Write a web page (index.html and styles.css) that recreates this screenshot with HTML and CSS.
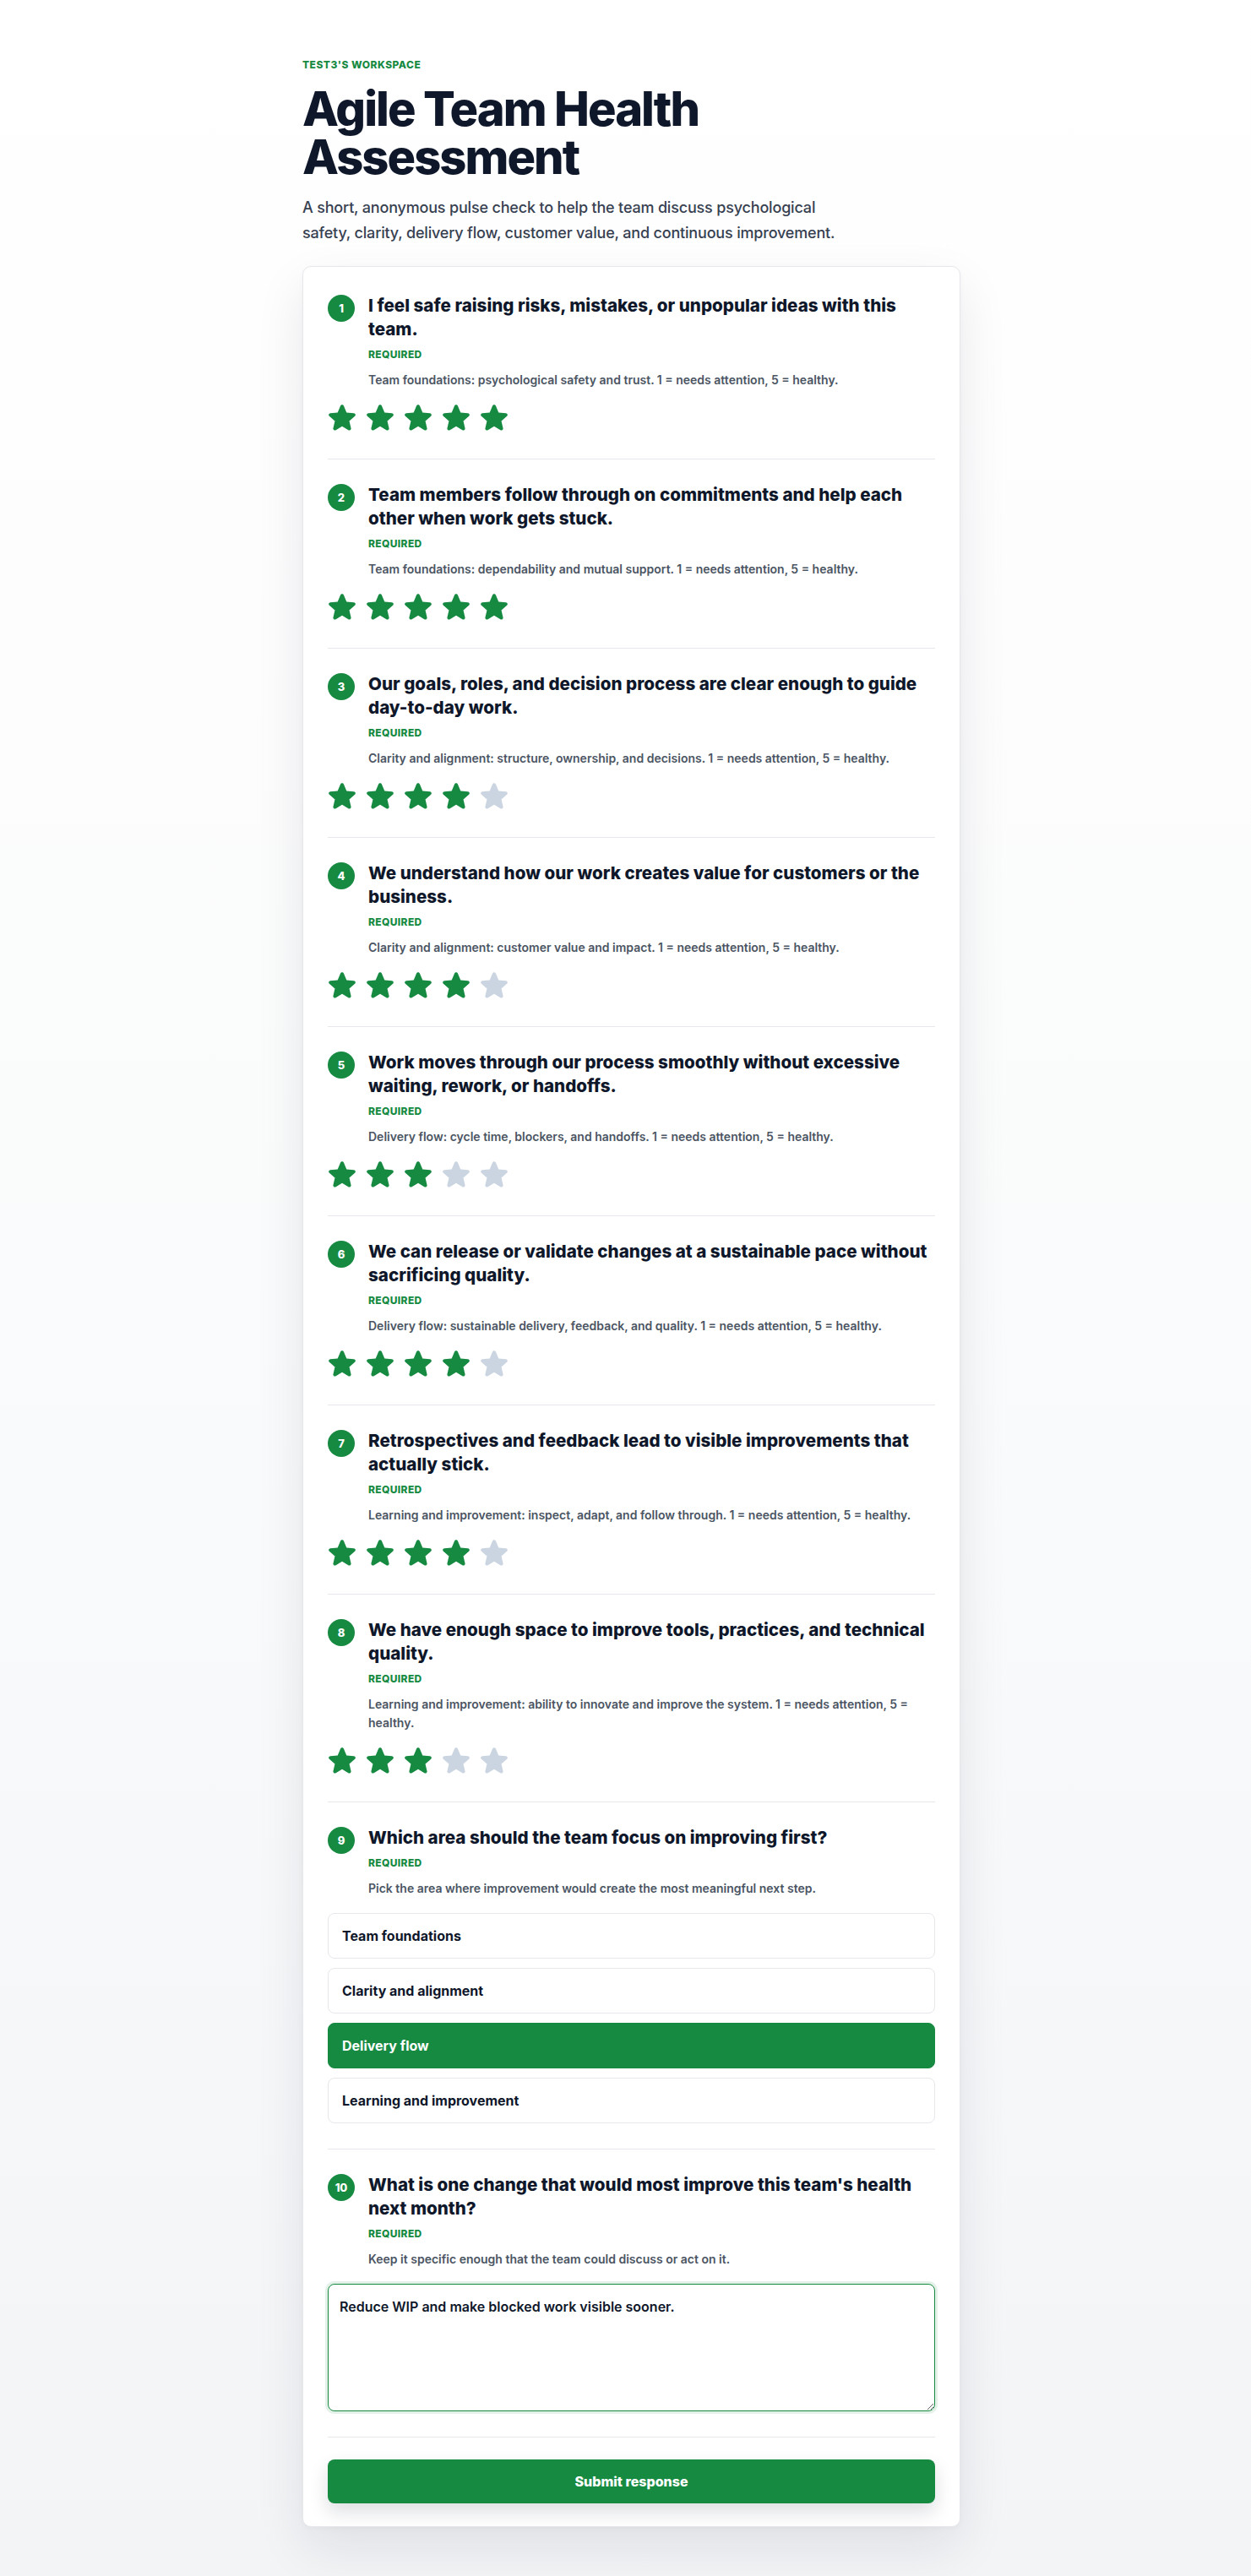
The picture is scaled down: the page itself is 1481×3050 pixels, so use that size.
FILE: index.html
```html
<!DOCTYPE html>
<html lang="en">
<head>
<meta charset="utf-8">
<title>Agile Team Health Assessment</title>
<link rel="stylesheet" href="styles.css">
</head>
<body>
<main class="page">
  <header class="intro">
    <div class="eyebrow">Test3's Workspace</div>
    <h1 class="title">Agile Team Health Assessment</h1>
    <p class="lead">A short, anonymous pulse check to help the team discuss psychological safety, clarity, delivery flow, customer value, and continuous improvement.</p>
  </header>

  <form class="card">
    <section class="question">
      <div class="q-head">
        <span class="num">1</span>
        <div class="q-text">
          <h2 class="q-title">I feel safe raising risks, mistakes, or unpopular ideas with this team.</h2>
          <div class="req">Required</div>
          <p class="q-desc">Team foundations: psychological safety and trust. 1 = needs attention, 5 = healthy.</p>
        </div>
      </div>
      <div class="stars" data-value="5">
        <svg class="star on" viewBox="2 2.4 20 19.2"><path d="M10.788 3.21c.448-1.077 1.976-1.077 2.424 0l2.082 5.006 5.404.434c1.164.093 1.636 1.545.749 2.305l-4.117 3.527 1.257 5.273c.271 1.136-.964 2.033-1.960 1.425L12 18.354 7.373 21.18c-.996.608-2.231-.29-1.960-1.425l1.257-5.273-4.117-3.527c-.887-.76-.415-2.212.749-2.305l5.404-.434 2.082-5.005Z"/></svg>
        <svg class="star on" viewBox="2 2.4 20 19.2"><path d="M10.788 3.21c.448-1.077 1.976-1.077 2.424 0l2.082 5.006 5.404.434c1.164.093 1.636 1.545.749 2.305l-4.117 3.527 1.257 5.273c.271 1.136-.964 2.033-1.960 1.425L12 18.354 7.373 21.18c-.996.608-2.231-.29-1.960-1.425l1.257-5.273-4.117-3.527c-.887-.76-.415-2.212.749-2.305l5.404-.434 2.082-5.005Z"/></svg>
        <svg class="star on" viewBox="2 2.4 20 19.2"><path d="M10.788 3.21c.448-1.077 1.976-1.077 2.424 0l2.082 5.006 5.404.434c1.164.093 1.636 1.545.749 2.305l-4.117 3.527 1.257 5.273c.271 1.136-.964 2.033-1.960 1.425L12 18.354 7.373 21.18c-.996.608-2.231-.29-1.960-1.425l1.257-5.273-4.117-3.527c-.887-.76-.415-2.212.749-2.305l5.404-.434 2.082-5.005Z"/></svg>
        <svg class="star on" viewBox="2 2.4 20 19.2"><path d="M10.788 3.21c.448-1.077 1.976-1.077 2.424 0l2.082 5.006 5.404.434c1.164.093 1.636 1.545.749 2.305l-4.117 3.527 1.257 5.273c.271 1.136-.964 2.033-1.960 1.425L12 18.354 7.373 21.18c-.996.608-2.231-.29-1.960-1.425l1.257-5.273-4.117-3.527c-.887-.76-.415-2.212.749-2.305l5.404-.434 2.082-5.005Z"/></svg>
        <svg class="star on" viewBox="2 2.4 20 19.2"><path d="M10.788 3.21c.448-1.077 1.976-1.077 2.424 0l2.082 5.006 5.404.434c1.164.093 1.636 1.545.749 2.305l-4.117 3.527 1.257 5.273c.271 1.136-.964 2.033-1.960 1.425L12 18.354 7.373 21.18c-.996.608-2.231-.29-1.960-1.425l1.257-5.273-4.117-3.527c-.887-.76-.415-2.212.749-2.305l5.404-.434 2.082-5.005Z"/></svg>
      </div>
    </section>

    <section class="question">
      <div class="q-head">
        <span class="num">2</span>
        <div class="q-text">
          <h2 class="q-title">Team members follow through on commitments and help each other when work gets stuck.</h2>
          <div class="req">Required</div>
          <p class="q-desc">Team foundations: dependability and mutual support. 1 = needs attention, 5 = healthy.</p>
        </div>
      </div>
      <div class="stars" data-value="5">
        <svg class="star on" viewBox="2 2.4 20 19.2"><path d="M10.788 3.21c.448-1.077 1.976-1.077 2.424 0l2.082 5.006 5.404.434c1.164.093 1.636 1.545.749 2.305l-4.117 3.527 1.257 5.273c.271 1.136-.964 2.033-1.960 1.425L12 18.354 7.373 21.18c-.996.608-2.231-.29-1.960-1.425l1.257-5.273-4.117-3.527c-.887-.76-.415-2.212.749-2.305l5.404-.434 2.082-5.005Z"/></svg>
        <svg class="star on" viewBox="2 2.4 20 19.2"><path d="M10.788 3.21c.448-1.077 1.976-1.077 2.424 0l2.082 5.006 5.404.434c1.164.093 1.636 1.545.749 2.305l-4.117 3.527 1.257 5.273c.271 1.136-.964 2.033-1.960 1.425L12 18.354 7.373 21.18c-.996.608-2.231-.29-1.960-1.425l1.257-5.273-4.117-3.527c-.887-.76-.415-2.212.749-2.305l5.404-.434 2.082-5.005Z"/></svg>
        <svg class="star on" viewBox="2 2.4 20 19.2"><path d="M10.788 3.21c.448-1.077 1.976-1.077 2.424 0l2.082 5.006 5.404.434c1.164.093 1.636 1.545.749 2.305l-4.117 3.527 1.257 5.273c.271 1.136-.964 2.033-1.960 1.425L12 18.354 7.373 21.18c-.996.608-2.231-.29-1.960-1.425l1.257-5.273-4.117-3.527c-.887-.76-.415-2.212.749-2.305l5.404-.434 2.082-5.005Z"/></svg>
        <svg class="star on" viewBox="2 2.4 20 19.2"><path d="M10.788 3.21c.448-1.077 1.976-1.077 2.424 0l2.082 5.006 5.404.434c1.164.093 1.636 1.545.749 2.305l-4.117 3.527 1.257 5.273c.271 1.136-.964 2.033-1.960 1.425L12 18.354 7.373 21.18c-.996.608-2.231-.29-1.960-1.425l1.257-5.273-4.117-3.527c-.887-.76-.415-2.212.749-2.305l5.404-.434 2.082-5.005Z"/></svg>
        <svg class="star on" viewBox="2 2.4 20 19.2"><path d="M10.788 3.21c.448-1.077 1.976-1.077 2.424 0l2.082 5.006 5.404.434c1.164.093 1.636 1.545.749 2.305l-4.117 3.527 1.257 5.273c.271 1.136-.964 2.033-1.960 1.425L12 18.354 7.373 21.18c-.996.608-2.231-.29-1.960-1.425l1.257-5.273-4.117-3.527c-.887-.76-.415-2.212.749-2.305l5.404-.434 2.082-5.005Z"/></svg>
      </div>
    </section>

    <section class="question">
      <div class="q-head">
        <span class="num">3</span>
        <div class="q-text">
          <h2 class="q-title">Our goals, roles, and decision process are clear enough to guide day-to-day work.</h2>
          <div class="req">Required</div>
          <p class="q-desc">Clarity and alignment: structure, ownership, and decisions. 1 = needs attention, 5 = healthy.</p>
        </div>
      </div>
      <div class="stars" data-value="4">
        <svg class="star on" viewBox="2 2.4 20 19.2"><path d="M10.788 3.21c.448-1.077 1.976-1.077 2.424 0l2.082 5.006 5.404.434c1.164.093 1.636 1.545.749 2.305l-4.117 3.527 1.257 5.273c.271 1.136-.964 2.033-1.960 1.425L12 18.354 7.373 21.18c-.996.608-2.231-.29-1.960-1.425l1.257-5.273-4.117-3.527c-.887-.76-.415-2.212.749-2.305l5.404-.434 2.082-5.005Z"/></svg>
        <svg class="star on" viewBox="2 2.4 20 19.2"><path d="M10.788 3.21c.448-1.077 1.976-1.077 2.424 0l2.082 5.006 5.404.434c1.164.093 1.636 1.545.749 2.305l-4.117 3.527 1.257 5.273c.271 1.136-.964 2.033-1.960 1.425L12 18.354 7.373 21.18c-.996.608-2.231-.29-1.960-1.425l1.257-5.273-4.117-3.527c-.887-.76-.415-2.212.749-2.305l5.404-.434 2.082-5.005Z"/></svg>
        <svg class="star on" viewBox="2 2.4 20 19.2"><path d="M10.788 3.21c.448-1.077 1.976-1.077 2.424 0l2.082 5.006 5.404.434c1.164.093 1.636 1.545.749 2.305l-4.117 3.527 1.257 5.273c.271 1.136-.964 2.033-1.960 1.425L12 18.354 7.373 21.18c-.996.608-2.231-.29-1.960-1.425l1.257-5.273-4.117-3.527c-.887-.76-.415-2.212.749-2.305l5.404-.434 2.082-5.005Z"/></svg>
        <svg class="star on" viewBox="2 2.4 20 19.2"><path d="M10.788 3.21c.448-1.077 1.976-1.077 2.424 0l2.082 5.006 5.404.434c1.164.093 1.636 1.545.749 2.305l-4.117 3.527 1.257 5.273c.271 1.136-.964 2.033-1.960 1.425L12 18.354 7.373 21.18c-.996.608-2.231-.29-1.960-1.425l1.257-5.273-4.117-3.527c-.887-.76-.415-2.212.749-2.305l5.404-.434 2.082-5.005Z"/></svg>
        <svg class="star" viewBox="2 2.4 20 19.2"><path d="M10.788 3.21c.448-1.077 1.976-1.077 2.424 0l2.082 5.006 5.404.434c1.164.093 1.636 1.545.749 2.305l-4.117 3.527 1.257 5.273c.271 1.136-.964 2.033-1.960 1.425L12 18.354 7.373 21.18c-.996.608-2.231-.29-1.960-1.425l1.257-5.273-4.117-3.527c-.887-.76-.415-2.212.749-2.305l5.404-.434 2.082-5.005Z"/></svg>
      </div>
    </section>

    <section class="question">
      <div class="q-head">
        <span class="num">4</span>
        <div class="q-text">
          <h2 class="q-title">We understand how our work creates value for customers or the business.</h2>
          <div class="req">Required</div>
          <p class="q-desc">Clarity and alignment: customer value and impact. 1 = needs attention, 5 = healthy.</p>
        </div>
      </div>
      <div class="stars" data-value="4">
        <svg class="star on" viewBox="2 2.4 20 19.2"><path d="M10.788 3.21c.448-1.077 1.976-1.077 2.424 0l2.082 5.006 5.404.434c1.164.093 1.636 1.545.749 2.305l-4.117 3.527 1.257 5.273c.271 1.136-.964 2.033-1.960 1.425L12 18.354 7.373 21.18c-.996.608-2.231-.29-1.960-1.425l1.257-5.273-4.117-3.527c-.887-.76-.415-2.212.749-2.305l5.404-.434 2.082-5.005Z"/></svg>
        <svg class="star on" viewBox="2 2.4 20 19.2"><path d="M10.788 3.21c.448-1.077 1.976-1.077 2.424 0l2.082 5.006 5.404.434c1.164.093 1.636 1.545.749 2.305l-4.117 3.527 1.257 5.273c.271 1.136-.964 2.033-1.960 1.425L12 18.354 7.373 21.18c-.996.608-2.231-.29-1.960-1.425l1.257-5.273-4.117-3.527c-.887-.76-.415-2.212.749-2.305l5.404-.434 2.082-5.005Z"/></svg>
        <svg class="star on" viewBox="2 2.4 20 19.2"><path d="M10.788 3.21c.448-1.077 1.976-1.077 2.424 0l2.082 5.006 5.404.434c1.164.093 1.636 1.545.749 2.305l-4.117 3.527 1.257 5.273c.271 1.136-.964 2.033-1.960 1.425L12 18.354 7.373 21.18c-.996.608-2.231-.29-1.960-1.425l1.257-5.273-4.117-3.527c-.887-.76-.415-2.212.749-2.305l5.404-.434 2.082-5.005Z"/></svg>
        <svg class="star on" viewBox="2 2.4 20 19.2"><path d="M10.788 3.21c.448-1.077 1.976-1.077 2.424 0l2.082 5.006 5.404.434c1.164.093 1.636 1.545.749 2.305l-4.117 3.527 1.257 5.273c.271 1.136-.964 2.033-1.960 1.425L12 18.354 7.373 21.18c-.996.608-2.231-.29-1.960-1.425l1.257-5.273-4.117-3.527c-.887-.76-.415-2.212.749-2.305l5.404-.434 2.082-5.005Z"/></svg>
        <svg class="star" viewBox="2 2.4 20 19.2"><path d="M10.788 3.21c.448-1.077 1.976-1.077 2.424 0l2.082 5.006 5.404.434c1.164.093 1.636 1.545.749 2.305l-4.117 3.527 1.257 5.273c.271 1.136-.964 2.033-1.960 1.425L12 18.354 7.373 21.18c-.996.608-2.231-.29-1.960-1.425l1.257-5.273-4.117-3.527c-.887-.76-.415-2.212.749-2.305l5.404-.434 2.082-5.005Z"/></svg>
      </div>
    </section>

    <section class="question">
      <div class="q-head">
        <span class="num">5</span>
        <div class="q-text">
          <h2 class="q-title">Work moves through our process smoothly without excessive waiting, rework, or handoffs.</h2>
          <div class="req">Required</div>
          <p class="q-desc">Delivery flow: cycle time, blockers, and handoffs. 1 = needs attention, 5 = healthy.</p>
        </div>
      </div>
      <div class="stars" data-value="3">
        <svg class="star on" viewBox="2 2.4 20 19.2"><path d="M10.788 3.21c.448-1.077 1.976-1.077 2.424 0l2.082 5.006 5.404.434c1.164.093 1.636 1.545.749 2.305l-4.117 3.527 1.257 5.273c.271 1.136-.964 2.033-1.960 1.425L12 18.354 7.373 21.18c-.996.608-2.231-.29-1.960-1.425l1.257-5.273-4.117-3.527c-.887-.76-.415-2.212.749-2.305l5.404-.434 2.082-5.005Z"/></svg>
        <svg class="star on" viewBox="2 2.4 20 19.2"><path d="M10.788 3.21c.448-1.077 1.976-1.077 2.424 0l2.082 5.006 5.404.434c1.164.093 1.636 1.545.749 2.305l-4.117 3.527 1.257 5.273c.271 1.136-.964 2.033-1.960 1.425L12 18.354 7.373 21.18c-.996.608-2.231-.29-1.960-1.425l1.257-5.273-4.117-3.527c-.887-.76-.415-2.212.749-2.305l5.404-.434 2.082-5.005Z"/></svg>
        <svg class="star on" viewBox="2 2.4 20 19.2"><path d="M10.788 3.21c.448-1.077 1.976-1.077 2.424 0l2.082 5.006 5.404.434c1.164.093 1.636 1.545.749 2.305l-4.117 3.527 1.257 5.273c.271 1.136-.964 2.033-1.960 1.425L12 18.354 7.373 21.18c-.996.608-2.231-.29-1.960-1.425l1.257-5.273-4.117-3.527c-.887-.76-.415-2.212.749-2.305l5.404-.434 2.082-5.005Z"/></svg>
        <svg class="star" viewBox="2 2.4 20 19.2"><path d="M10.788 3.21c.448-1.077 1.976-1.077 2.424 0l2.082 5.006 5.404.434c1.164.093 1.636 1.545.749 2.305l-4.117 3.527 1.257 5.273c.271 1.136-.964 2.033-1.960 1.425L12 18.354 7.373 21.18c-.996.608-2.231-.29-1.960-1.425l1.257-5.273-4.117-3.527c-.887-.76-.415-2.212.749-2.305l5.404-.434 2.082-5.005Z"/></svg>
        <svg class="star" viewBox="2 2.4 20 19.2"><path d="M10.788 3.21c.448-1.077 1.976-1.077 2.424 0l2.082 5.006 5.404.434c1.164.093 1.636 1.545.749 2.305l-4.117 3.527 1.257 5.273c.271 1.136-.964 2.033-1.960 1.425L12 18.354 7.373 21.18c-.996.608-2.231-.29-1.960-1.425l1.257-5.273-4.117-3.527c-.887-.76-.415-2.212.749-2.305l5.404-.434 2.082-5.005Z"/></svg>
      </div>
    </section>

    <section class="question">
      <div class="q-head">
        <span class="num">6</span>
        <div class="q-text">
          <h2 class="q-title">We can release or validate changes at a sustainable pace without sacrificing quality.</h2>
          <div class="req">Required</div>
          <p class="q-desc">Delivery flow: sustainable delivery, feedback, and quality. 1 = needs attention, 5 = healthy.</p>
        </div>
      </div>
      <div class="stars" data-value="4">
        <svg class="star on" viewBox="2 2.4 20 19.2"><path d="M10.788 3.21c.448-1.077 1.976-1.077 2.424 0l2.082 5.006 5.404.434c1.164.093 1.636 1.545.749 2.305l-4.117 3.527 1.257 5.273c.271 1.136-.964 2.033-1.960 1.425L12 18.354 7.373 21.18c-.996.608-2.231-.29-1.960-1.425l1.257-5.273-4.117-3.527c-.887-.76-.415-2.212.749-2.305l5.404-.434 2.082-5.005Z"/></svg>
        <svg class="star on" viewBox="2 2.4 20 19.2"><path d="M10.788 3.21c.448-1.077 1.976-1.077 2.424 0l2.082 5.006 5.404.434c1.164.093 1.636 1.545.749 2.305l-4.117 3.527 1.257 5.273c.271 1.136-.964 2.033-1.960 1.425L12 18.354 7.373 21.18c-.996.608-2.231-.29-1.960-1.425l1.257-5.273-4.117-3.527c-.887-.76-.415-2.212.749-2.305l5.404-.434 2.082-5.005Z"/></svg>
        <svg class="star on" viewBox="2 2.4 20 19.2"><path d="M10.788 3.21c.448-1.077 1.976-1.077 2.424 0l2.082 5.006 5.404.434c1.164.093 1.636 1.545.749 2.305l-4.117 3.527 1.257 5.273c.271 1.136-.964 2.033-1.960 1.425L12 18.354 7.373 21.18c-.996.608-2.231-.29-1.960-1.425l1.257-5.273-4.117-3.527c-.887-.76-.415-2.212.749-2.305l5.404-.434 2.082-5.005Z"/></svg>
        <svg class="star on" viewBox="2 2.4 20 19.2"><path d="M10.788 3.21c.448-1.077 1.976-1.077 2.424 0l2.082 5.006 5.404.434c1.164.093 1.636 1.545.749 2.305l-4.117 3.527 1.257 5.273c.271 1.136-.964 2.033-1.960 1.425L12 18.354 7.373 21.18c-.996.608-2.231-.29-1.960-1.425l1.257-5.273-4.117-3.527c-.887-.76-.415-2.212.749-2.305l5.404-.434 2.082-5.005Z"/></svg>
        <svg class="star" viewBox="2 2.4 20 19.2"><path d="M10.788 3.21c.448-1.077 1.976-1.077 2.424 0l2.082 5.006 5.404.434c1.164.093 1.636 1.545.749 2.305l-4.117 3.527 1.257 5.273c.271 1.136-.964 2.033-1.960 1.425L12 18.354 7.373 21.18c-.996.608-2.231-.29-1.960-1.425l1.257-5.273-4.117-3.527c-.887-.76-.415-2.212.749-2.305l5.404-.434 2.082-5.005Z"/></svg>
      </div>
    </section>

    <section class="question">
      <div class="q-head">
        <span class="num">7</span>
        <div class="q-text">
          <h2 class="q-title">Retrospectives and feedback lead to visible improvements that actually stick.</h2>
          <div class="req">Required</div>
          <p class="q-desc">Learning and improvement: inspect, adapt, and follow through. 1 = needs attention, 5 = healthy.</p>
        </div>
      </div>
      <div class="stars" data-value="4">
        <svg class="star on" viewBox="2 2.4 20 19.2"><path d="M10.788 3.21c.448-1.077 1.976-1.077 2.424 0l2.082 5.006 5.404.434c1.164.093 1.636 1.545.749 2.305l-4.117 3.527 1.257 5.273c.271 1.136-.964 2.033-1.960 1.425L12 18.354 7.373 21.18c-.996.608-2.231-.29-1.960-1.425l1.257-5.273-4.117-3.527c-.887-.76-.415-2.212.749-2.305l5.404-.434 2.082-5.005Z"/></svg>
        <svg class="star on" viewBox="2 2.4 20 19.2"><path d="M10.788 3.21c.448-1.077 1.976-1.077 2.424 0l2.082 5.006 5.404.434c1.164.093 1.636 1.545.749 2.305l-4.117 3.527 1.257 5.273c.271 1.136-.964 2.033-1.960 1.425L12 18.354 7.373 21.18c-.996.608-2.231-.29-1.960-1.425l1.257-5.273-4.117-3.527c-.887-.76-.415-2.212.749-2.305l5.404-.434 2.082-5.005Z"/></svg>
        <svg class="star on" viewBox="2 2.4 20 19.2"><path d="M10.788 3.21c.448-1.077 1.976-1.077 2.424 0l2.082 5.006 5.404.434c1.164.093 1.636 1.545.749 2.305l-4.117 3.527 1.257 5.273c.271 1.136-.964 2.033-1.960 1.425L12 18.354 7.373 21.18c-.996.608-2.231-.29-1.960-1.425l1.257-5.273-4.117-3.527c-.887-.76-.415-2.212.749-2.305l5.404-.434 2.082-5.005Z"/></svg>
        <svg class="star on" viewBox="2 2.4 20 19.2"><path d="M10.788 3.21c.448-1.077 1.976-1.077 2.424 0l2.082 5.006 5.404.434c1.164.093 1.636 1.545.749 2.305l-4.117 3.527 1.257 5.273c.271 1.136-.964 2.033-1.960 1.425L12 18.354 7.373 21.18c-.996.608-2.231-.29-1.960-1.425l1.257-5.273-4.117-3.527c-.887-.76-.415-2.212.749-2.305l5.404-.434 2.082-5.005Z"/></svg>
        <svg class="star" viewBox="2 2.4 20 19.2"><path d="M10.788 3.21c.448-1.077 1.976-1.077 2.424 0l2.082 5.006 5.404.434c1.164.093 1.636 1.545.749 2.305l-4.117 3.527 1.257 5.273c.271 1.136-.964 2.033-1.960 1.425L12 18.354 7.373 21.18c-.996.608-2.231-.29-1.960-1.425l1.257-5.273-4.117-3.527c-.887-.76-.415-2.212.749-2.305l5.404-.434 2.082-5.005Z"/></svg>
      </div>
    </section>

    <section class="question">
      <div class="q-head">
        <span class="num">8</span>
        <div class="q-text">
          <h2 class="q-title">We have enough space to improve tools, practices, and technical quality.</h2>
          <div class="req">Required</div>
          <p class="q-desc">Learning and improvement: ability to innovate and improve the system. 1 = needs attention, 5 = healthy.</p>
        </div>
      </div>
      <div class="stars" data-value="3">
        <svg class="star on" viewBox="2 2.4 20 19.2"><path d="M10.788 3.21c.448-1.077 1.976-1.077 2.424 0l2.082 5.006 5.404.434c1.164.093 1.636 1.545.749 2.305l-4.117 3.527 1.257 5.273c.271 1.136-.964 2.033-1.960 1.425L12 18.354 7.373 21.18c-.996.608-2.231-.29-1.960-1.425l1.257-5.273-4.117-3.527c-.887-.76-.415-2.212.749-2.305l5.404-.434 2.082-5.005Z"/></svg>
        <svg class="star on" viewBox="2 2.4 20 19.2"><path d="M10.788 3.21c.448-1.077 1.976-1.077 2.424 0l2.082 5.006 5.404.434c1.164.093 1.636 1.545.749 2.305l-4.117 3.527 1.257 5.273c.271 1.136-.964 2.033-1.960 1.425L12 18.354 7.373 21.18c-.996.608-2.231-.29-1.960-1.425l1.257-5.273-4.117-3.527c-.887-.76-.415-2.212.749-2.305l5.404-.434 2.082-5.005Z"/></svg>
        <svg class="star on" viewBox="2 2.4 20 19.2"><path d="M10.788 3.21c.448-1.077 1.976-1.077 2.424 0l2.082 5.006 5.404.434c1.164.093 1.636 1.545.749 2.305l-4.117 3.527 1.257 5.273c.271 1.136-.964 2.033-1.960 1.425L12 18.354 7.373 21.18c-.996.608-2.231-.29-1.960-1.425l1.257-5.273-4.117-3.527c-.887-.76-.415-2.212.749-2.305l5.404-.434 2.082-5.005Z"/></svg>
        <svg class="star" viewBox="2 2.4 20 19.2"><path d="M10.788 3.21c.448-1.077 1.976-1.077 2.424 0l2.082 5.006 5.404.434c1.164.093 1.636 1.545.749 2.305l-4.117 3.527 1.257 5.273c.271 1.136-.964 2.033-1.960 1.425L12 18.354 7.373 21.18c-.996.608-2.231-.29-1.960-1.425l1.257-5.273-4.117-3.527c-.887-.76-.415-2.212.749-2.305l5.404-.434 2.082-5.005Z"/></svg>
        <svg class="star" viewBox="2 2.4 20 19.2"><path d="M10.788 3.21c.448-1.077 1.976-1.077 2.424 0l2.082 5.006 5.404.434c1.164.093 1.636 1.545.749 2.305l-4.117 3.527 1.257 5.273c.271 1.136-.964 2.033-1.960 1.425L12 18.354 7.373 21.18c-.996.608-2.231-.29-1.960-1.425l1.257-5.273-4.117-3.527c-.887-.76-.415-2.212.749-2.305l5.404-.434 2.082-5.005Z"/></svg>
      </div>
    </section>

    <section class="question">
      <div class="q-head">
        <span class="num">9</span>
        <div class="q-text">
          <h2 class="q-title">Which area should the team focus on improving first?</h2>
          <div class="req">Required</div>
          <p class="q-desc">Pick the area where improvement would create the most meaningful next step.</p>
        </div>
      </div>
      <div class="options">
        <div class="option">Team foundations</div>
        <div class="option">Clarity and alignment</div>
        <div class="option selected">Delivery flow</div>
        <div class="option">Learning and improvement</div>
      </div>
    </section>

    <section class="question">
      <div class="q-head">
        <span class="num">10</span>
        <div class="q-text">
          <h2 class="q-title">What is one change that would most improve this team's health next month?</h2>
          <div class="req">Required</div>
          <p class="q-desc">Keep it specific enough that the team could discuss or act on it.</p>
        </div>
      </div>
      <textarea class="answer">Reduce WIP and make blocked work visible sooner.</textarea>
    </section>

    <div class="footer">
      <button type="button" class="submit">Submit response</button>
    </div>
  </form>
</main>
</body>
</html>
```
FILE: styles.css
```css
* { box-sizing: border-box; }

html, body { margin: 0; padding: 0; }

body {
  font-family: Inter, "Noto Sans", "Liberation Sans", sans-serif;
  color: #0f172a;
  background: linear-gradient(180deg, #ffffff 0%, #f9fafb 60%, #f3f4f6 100%);
  min-height: 3050px;
  padding-left: 14px;
}

.page {
  width: 779px;
  margin: 0 auto;
  padding: 69px 0 60px;
}

.intro { margin-bottom: 24px; }

.eyebrow {
  font-size: 12px;
  line-height: 16px;
  font-weight: 800;
  letter-spacing: 0.04em;
  text-transform: uppercase;
  color: #178a42;
}

.title {
  margin: 16px 0 0;
  font-size: 56px;
  line-height: 57px;
  font-weight: 800;
  letter-spacing: -0.035em;
  color: #0f172a;
  max-width: 520px;
}

.lead {
  margin: 16px 0 0;
  max-width: 660px;
  font-size: 18px;
  line-height: 30px;
  font-weight: 500;
  letter-spacing: -0.01em;
  color: #374151;
}

.card {
  background: #ffffff;
  border: 1px solid #e5e7eb;
  border-radius: 10px;
  padding: 32px 29px 27px;
  box-shadow: 0 24px 60px rgba(15, 23, 42, 0.09), 0 2px 6px rgba(15, 23, 42, 0.03);
}

.question {
  padding: 28px 0 30px;
  border-bottom: 1px solid #e5e7eb;
}
.question:first-child { padding-top: 0; }

.q-head {
  display: flex;
  gap: 16px;
  align-items: flex-start;
}

.num {
  flex: 0 0 32px;
  width: 32px;
  height: 32px;
  margin-top: 1px;
  border-radius: 50%;
  background: #178a42;
  color: #ffffff;
  font-size: 13px;
  font-weight: 800;
  display: flex;
  align-items: center;
  justify-content: center;
}

.q-text { flex: 1; min-width: 0; }

.q-title {
  margin: 0;
  font-size: 20.6px;
  line-height: 28px;
  font-weight: 800;
  letter-spacing: 0;
  color: #0f172a;
}

.req {
  margin-top: 8px;
  font-size: 12px;
  line-height: 15px;
  font-weight: 800;
  letter-spacing: 0.03em;
  text-transform: uppercase;
  color: #178a42;
}

.q-desc {
  margin: 12px 0 0;
  font-size: 14px;
  line-height: 22px;
  font-weight: 600;
  color: #4b5563;
}

.stars {
  display: flex;
  gap: 13px;
  margin-top: 18px;
  height: 34px;
  padding-left: 1px;
}

.star {
  width: 32px;
  height: 31px;
  fill: #cbd5e1;
}
.star.on { fill: #178a42; }

.options {
  margin-top: 18px;
  display: flex;
  flex-direction: column;
  gap: 11px;
}

.option {
  height: 54px;
  display: flex;
  align-items: center;
  padding: 0 16px;
  border: 1px solid #e5e7eb;
  border-radius: 8px;
  background: #ffffff;
  font-size: 16px;
  font-weight: 700;
  color: #0f172a;
}
.option.selected {
  background: #178a42;
  border-color: #178a42;
  color: #ffffff;
}

.answer {
  display: block;
  width: 100%;
  height: 151px;
  margin-top: 18px;
  padding: 14px 13px;
  border: 1px solid #178a42;
  border-radius: 8px;
  box-shadow: 0 0 0 3px rgba(23, 138, 66, 0.12);
  font-family: inherit;
  font-size: 16px;
  line-height: 24px;
  font-weight: 600;
  color: #0f172a;
  outline: none;
}

.footer { padding-top: 26px; }

.submit {
  display: block;
  width: 100%;
  height: 52px;
  border: 0;
  border-radius: 8px;
  background: #178a42;
  color: #ffffff;
  font-family: inherit;
  font-size: 16px;
  font-weight: 800;
  box-shadow: 0 10px 22px rgba(15, 23, 42, 0.14);
}
```
